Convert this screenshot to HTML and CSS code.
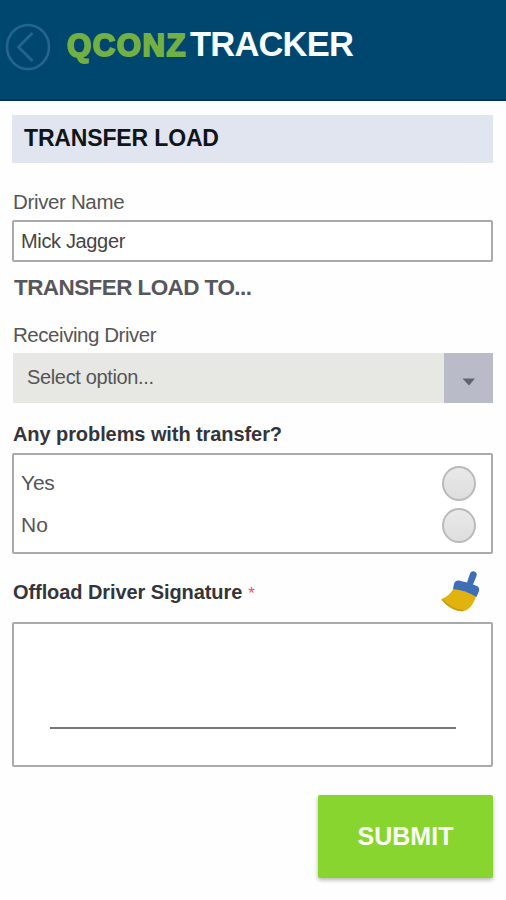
FILE: index.html
```html
<!DOCTYPE html>
<html lang="en">
<head>
<meta charset="utf-8">
<title>QCONZ Tracker</title>
<link rel="stylesheet" href="styles.css">
</head>
<body>
<header class="bar">
  <svg class="back" viewBox="0 0 46 48" fill="none" stroke="#25648f" stroke-width="2.6"><ellipse cx="23" cy="24" rx="21" ry="22"/><path d="M27.500 10 13.500 24 27.500 38" stroke-width="2.8"/></svg>
  <h1 class="logo"><span class="brand">QCONZ</span><span class="product">TRACKER</span></h1>
</header>
<main class="form">
  <h2 class="title"><span>TRANSFER LOAD</span></h2>
  <label class="label driver-label">Driver Name</label>
  <div class="input"><span>Mick Jagger</span></div>
  <h3 class="subtitle">TRANSFER LOAD TO...</h3>
  <label class="label receiving-label">Receiving Driver</label>
  <div class="select"><span class="placeholder">Select option...</span><span class="toggle"><svg width="14" height="8" viewBox="0 0 14 8"><path d="M.5 .5H13L7 7.500Z" fill="#616270"/></svg></span></div>
  <div class="question problems">Any problems with transfer?</div>
  <div class="options">
    <div class="option"><span class="yes">Yes</span><i class="radio"></i></div>
    <div class="option"><span>No</span><i class="radio"></i></div>
  </div>
  <div class="signature-head">
    <div class="question signature-label">Offload Driver Signature<span class="required">*</span></div>
    <svg class="brush" viewBox="0 0 40 42"><path d="M.5 29C6 27 10 23 13 18L35.500 25C33 33 29 39.500 23 41C14 42 6 37 .5 29Z" fill="#e0b30f"/><path d="M1 29.500C7 36 14 40.500 22 40.500" fill="none" stroke="#c39a1c" stroke-width="1.500"/><path d="M12 19 13 14Q14 10 18 10.500L26 12.500 29 3.500Q30.500 .5 33.500 1.500Q36.500 2.500 35.500 6L32 14.500L36 16Q39 18 38 21L35.500 27Q24 20 12 19Z" fill="#3e6eb5"/></svg>
  </div>
  <div class="signature"><div class="line"></div></div>
  <button class="submit">SUBMIT</button>
</main>
</body>
</html>
```
FILE: styles.css
```css
* { box-sizing: border-box; }
body {
  margin: 0;
  height: 900px;
  overflow: hidden;
  background: #fefefe;
  color: #555;
  font-family: "Liberation Sans", Arial, sans-serif;
}
h1, h2, h3 { margin: 0; }
.bar {
  display: flex;
  height: 101px;
  padding: 23px 0 0 5px;
  background: #00476f;
  border-bottom: 2px solid #003458;
}
.back { width: 46px; height: 48px; }
.logo {
  display: flex;
  align-items: baseline;
  height: 42px;
  margin-left: 16px;
  line-height: 42px;
  white-space: nowrap;
}
.brand {
  width: 123px;
  color: #72b043;
  font-size: 31px;
  letter-spacing: 1.6px;
  -webkit-text-stroke: 2px #72b043;
}
.product { color: #f8fdff; font-size: 34.5px; letter-spacing: -.8px; }
.form { display: flex; flex-direction: column; padding: 14px 13px 0 12px; }
.title {
  height: 48px;
  padding-left: 12px;
  background: #e1e5ef;
  color: #101519;
  font-size: 23px;
  line-height: 46px;
  letter-spacing: -.15px;
}
.label { padding-left: 1px; font-size: 20.5px; line-height: 24px; letter-spacing: -.35px; }
.driver-label { margin-top: 27px; height: 30px; }
.input {
  height: 42px;
  padding-left: 7px;
  border: 2px solid #aaa;
  border-radius: 2px;
  background: #fff;
  color: #454545;
  font-size: 20px;
  line-height: 39px;
  letter-spacing: -.35px;
}
.subtitle {
  height: 30px;
  margin-top: 11px;
  padding-left: 2px;
  color: #56575a;
  font-size: 22.5px;
  line-height: 30px;
  letter-spacing: -.58px;
}
.receiving-label { height: 30px; margin-top: 20px; line-height: 23px; letter-spacing: -.45px; }
.select {
  display: flex;
  height: 50px;
  margin-left: 1px;
  background: #e7e8e3;
}
.placeholder { flex: 1; padding-left: 14px; font-size: 20px; line-height: 49px; letter-spacing: -.35px; }
.toggle { display: grid; place-items: center; width: 49px; padding-top: 7px; background: #b9bcc8; }
.question { padding-left: 1px; color: #34353a; font-size: 20px; font-weight: bold; line-height: 24px; letter-spacing: -.08px; }
.problems { height: 31px; margin-top: 19px; }
.options {
  height: 101px;
  padding: 7px 15px 0 7px;
  border: 2px solid #aaa;
  border-radius: 2px;
  background: #fff;
}
.option { display: flex; align-items: center; justify-content: space-between; height: 42px; font-size: 21px; }
.yes { letter-spacing: -.2px; }
.radio {
  width: 34px;
  height: 35px;
  border: 2px solid #bababa;
  border-radius: 50%;
  background: linear-gradient(#e9e9e9, #dedede);
}
.signature-head { display: flex; justify-content: space-between; height: 68px; padding: 16px 12px 0 0; }
.signature-label { margin-top: 10px; }
.required { margin-left: 6px; color: #e8535c; font-size: 17px; font-weight: normal; }
.brush { width: 40px; height: 42px; }
.signature {
  height: 145px;
  padding: 103px 35px 0 36px;
  border: 2px solid #aaa;
  border-radius: 2px;
  background: #fff;
}
.line { height: 2px; background: #777; }
.submit {
  align-self: flex-end;
  width: 175px;
  height: 83px;
  margin-top: 28px;
  padding: 0;
  border: 0;
  border-radius: 2px;
  background: #87d52e;
  box-shadow: 0 2px 4px rgba(0, 0, 0, .3);
  color: #fbfff3;
  font: bold 25px "Liberation Sans", Arial, sans-serif;
}
```
